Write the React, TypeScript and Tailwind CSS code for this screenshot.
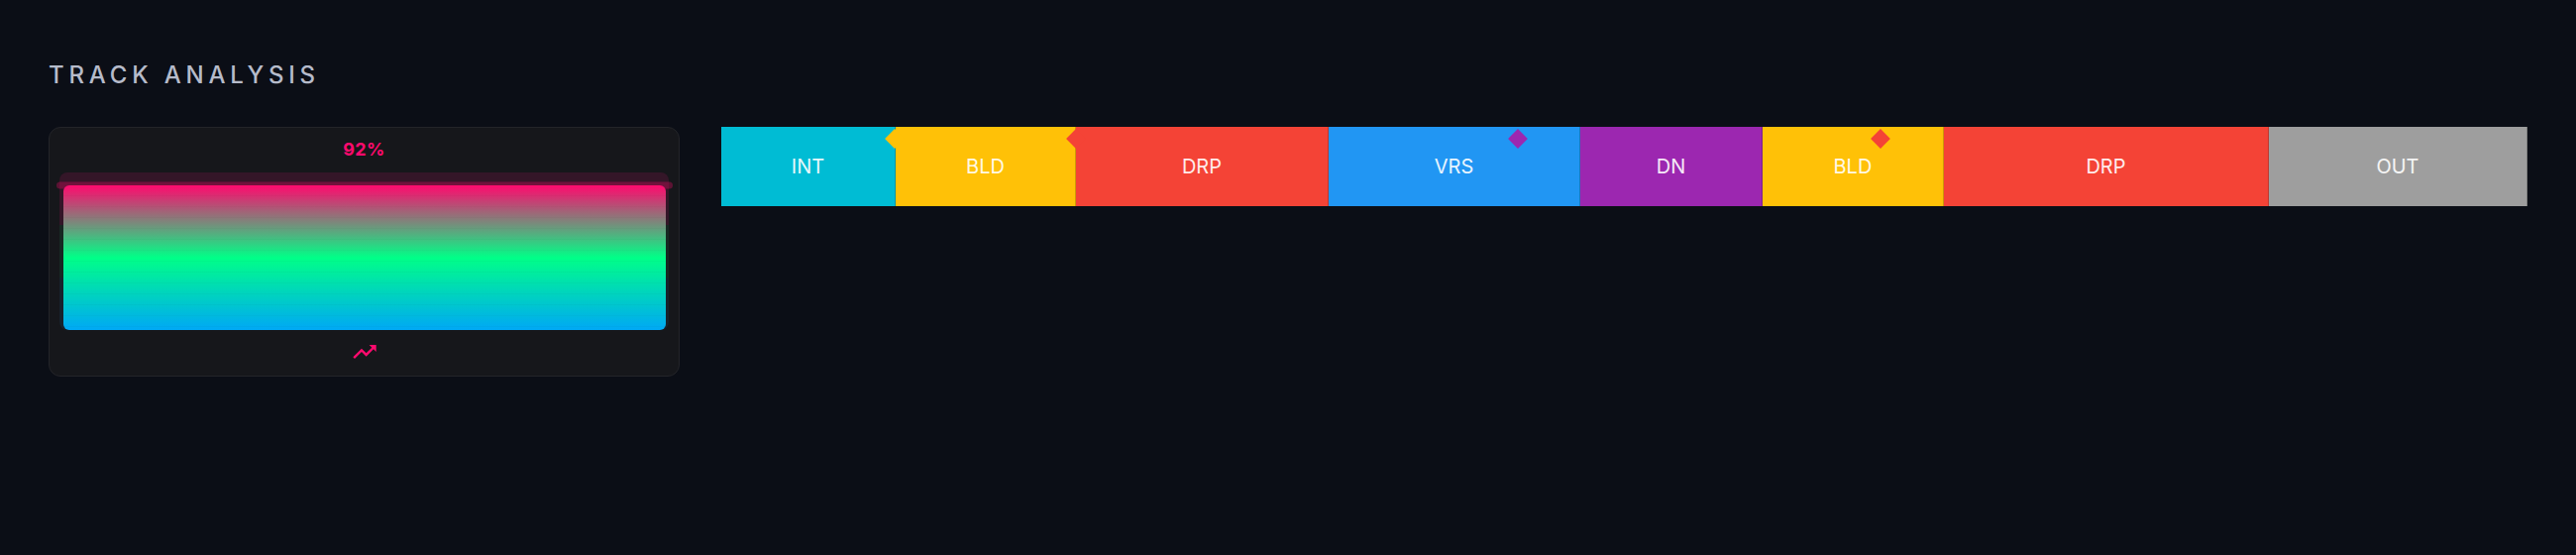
import { MdTrendingUp } from 'react-icons/md';

type Section = { label: string; width: number; color: string };
type Cue = { at: number; color: string };

const sections: Section[] = [
    { label: 'INT', width: 9.654, color: 'bg-[#00bcd4]' },
    { label: 'BLD', width: 9.984, color: 'bg-[#ffc107]' },
    { label: 'DRP', width: 13.988, color: 'bg-[#f44336]' },
    { label: 'VRS', width: 13.933, color: 'bg-[#2196f3]' },
    { label: 'DN', width: 10.093, color: 'bg-[#9c27b0]' },
    { label: 'BLD', width: 10.038, color: 'bg-[#ffc107]' },
    { label: 'DRP', width: 17.993, color: 'bg-[#f44336]' },
    { label: 'OUT', width: 14.317, color: 'bg-[#9e9e9e]' },
];

// cue points, coloured like the section they lead into
const cues: Cue[] = [
    { at: 9.6, color: 'bg-[#ffc107]' },
    { at: 19.64, color: 'bg-[#f44336]' },
    { at: 44.1, color: 'bg-[#9c27b0]' },
    { at: 64.18, color: 'bg-[#f44336]' },
];

const energy = 92;

const EnergyMeter = () => (
    <div className="w-[637px] shrink-0 flex flex-col items-center rounded-xl border border-[#232429] bg-[#16171b] px-2.5 pt-2 pb-[10px]">
        <div className="text-lg leading-7 font-bold tracking-wide text-[#ff0a6e]">{energy}%</div>

        {/* Meter track with three energy zones */}
        <div className="relative mt-[9px] w-full h-[159px]">
            <div className="absolute inset-0 grid grid-rows-3 overflow-hidden rounded-lg">
                <div className="bg-[#341628]" />
                <div className="bg-[#172823]" />
                <div className="bg-[#17222d]" />
            </div>
            <div
                className="absolute -left-[3px] -right-[4px] h-[7px] -translate-y-1/2 rounded-full bg-[#ff0a6e]/30"
                style={{ top: `${100 - energy}%` }}
            />
            <div
                className="absolute bottom-0 left-[4px] right-[3px] overflow-hidden rounded-md bg-[linear-gradient(to_bottom,#ff0a6e,#00ff88,#00a8f5)]"
                style={{ height: `${energy}%` }}
            >
                <div className="h-full w-full bg-[repeating-linear-gradient(to_bottom,transparent_0,transparent_10px,rgba(0,0,0,0.025)_10px,rgba(0,0,0,0.025)_11px)]" />
            </div>
        </div>

        <div className="mt-2 h-7 flex items-center justify-center">
            <MdTrendingUp size={28} className="text-[#ff0a6e]" />
        </div>
    </div>
);

const SectionBar = () => (
    <div className="relative flex-1 flex h-20 overflow-hidden">
        {sections.map((s, i) => (
            <div
                key={i}
                className={`${s.color} h-full flex items-center justify-center border-r border-black/20 last:border-r-0`}
                style={{ width: `${s.width}%` }}
            >
                <span className="text-[20px] text-white/90">{s.label}</span>
            </div>
        ))}
        {cues.map((c, i) => (
            <div
                key={i}
                className={`absolute top-[5px] w-[14px] h-[14px] -translate-x-1/2 rotate-45 ${c.color}`}
                style={{ left: `${c.at}%` }}
            />
        ))}
    </div>
);

export default function App() {
    return (
        <div className="min-h-[560px] w-full bg-[#0b0e16] px-[49px] pt-[60px] font-['Inter',sans-serif]">
            <h1 className="text-2xl leading-8 font-medium tracking-[0.2em] text-[#b6bbca]">TRACK ANALYSIS</h1>
            <div className="mt-9 flex items-start gap-[42px]">
                <EnergyMeter />
                <SectionBar />
            </div>
        </div>
    );
}
